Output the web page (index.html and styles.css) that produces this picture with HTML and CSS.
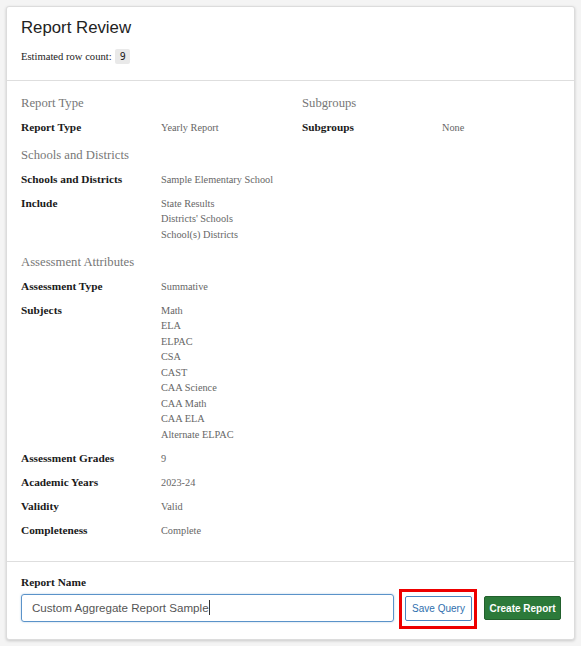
FILE: index.html
```html
<!DOCTYPE html>
<html>
<head>
<meta charset="utf-8">
<link rel="stylesheet" href="styles.css">
</head>
<body>
<div class="card">
  <div class="card-header">
    <h1 class="title">Report Review</h1>
    <div class="rowcount">Estimated row count: <span class="badge">9</span></div>
  </div>
  <div class="card-body">
    <div class="col">
      <div class="section">Report Type</div>
      <div class="row"><div class="label">Report Type</div><div class="value">Yearly Report</div></div>
      <div class="section spaced">Schools and Districts</div>
      <div class="row"><div class="label">Schools and Districts</div><div class="value">Sample Elementary School</div></div>
      <div class="row"><div class="label">Include</div><div class="value">State Results<br>Districts' Schools<br>School(s) Districts</div></div>
      <div class="section spaced">Assessment Attributes</div>
      <div class="row"><div class="label">Assessment Type</div><div class="value">Summative</div></div>
      <div class="row"><div class="label">Subjects</div><div class="value">Math<br>ELA<br>ELPAC<br>CSA<br>CAST<br>CAA Science<br>CAA Math<br>CAA ELA<br>Alternate ELPAC</div></div>
      <div class="row"><div class="label">Assessment Grades</div><div class="value">9</div></div>
      <div class="row"><div class="label">Academic Years</div><div class="value">2023-24</div></div>
      <div class="row"><div class="label">Validity</div><div class="value">Valid</div></div>
      <div class="row"><div class="label">Completeness</div><div class="value">Complete</div></div>
    </div>
    <div class="col">
      <div class="section">Subgroups</div>
      <div class="row"><div class="label">Subgroups</div><div class="value">None</div></div>
    </div>
  </div>
  <div class="card-footer">
    <div class="name-label">Report Name</div>
    <div class="actions">
      <div class="input">Custom Aggregate Report Sample<span class="caret"></span></div>
      <div class="highlight-wrap">
        <button class="btn btn-outline">Save Query</button>
        <div class="highlight"></div>
      </div>
      <button class="btn btn-green">Create Report</button>
    </div>
  </div>
</div>
</body>
</html>
```

FILE: styles.css
```css
* { box-sizing: border-box; }
html, body { margin: 0; padding: 0; }
body {
  background: #f4f4f4;
  padding: 6px;
  font-family: "Liberation Serif", "Times New Roman", serif;
  font-size: 10.5px;
  color: #222;
}
.card {
  background: #fff;
  border: 1px solid #dcdcdc;
  border-radius: 3px;
  box-shadow: 0 1px 3px rgba(0,0,0,0.18);
  width: 569px;
  height: 634px;
}
.card-header {
  padding: 10px 14px 15px;
  border-bottom: 1px solid #dedede;
}
.title {
  margin: 0;
  font-family: "Liberation Sans", Arial, sans-serif;
  font-weight: normal;
  font-size: 16.8px;
  line-height: 22px;
  color: #222;
}
.rowcount {
  margin-top: 10px;
  line-height: 15.5px;
  font-size: 10.6px;
}
.badge {
  display: inline-block;
  background: #e9e9e9;
  border-radius: 2px;
  font-family: "DejaVu Sans Mono", monospace;
  font-size: 10px;
  line-height: 15px;
  width: 15px;
  text-align: center;
  margin-left: 1px;
}
.card-body {
  display: grid;
  grid-template-columns: 281px 1fr;
  padding: 15px 14px 14px;
  border-bottom: 1px solid #dedede;
}
.section {
  font-size: 12.7px;
  line-height: 15.5px;
  color: #777;
  padding-bottom: 8.5px;
}
.section.spaced { margin-top: 4px; }
.row {
  display: flex;
  line-height: 15.5px;
  padding-bottom: 8.5px;
}
.label {
  width: 140px;
  flex: none;
  font-weight: bold;
  font-size: 11.3px;
  color: #1a1a1a;
}
.value { color: #666; font-size: 10.3px; }
.card-footer {
  padding: 13px 13px 0 14px;
}
.name-label {
  font-weight: bold;
  font-size: 11.3px;
  line-height: 15.5px;
  color: #1a1a1a;
}
.actions {
  display: flex;
  align-items: center;
  margin-top: 4px;
  gap: 11px;
}
.input {
  width: 373px;
  height: 28px;
  border: 1px solid #5b93c9;
  border-radius: 3px;
  box-shadow: 0 0 2px rgba(91,147,201,0.5);
  font-family: "Liberation Sans", Arial, sans-serif;
  font-size: 11.6px;
  color: #555;
  line-height: 26px;
  padding-left: 10px;
}
.caret {
  display: inline-block;
  width: 1px;
  height: 15px;
  background: #333;
  vertical-align: -3px;
}
.highlight-wrap { position: relative; display: flex; }
.highlight {
  position: absolute;
  left: -6px; right: -5px; top: -7px; bottom: -8px;
  border: 3px solid #ee0000;
}
.btn {
  font-family: "Liberation Sans", Arial, sans-serif;
  font-size: 10px;
  height: 25px;
  border-radius: 2px;
  padding: 0;
  white-space: nowrap;
  cursor: pointer;
}
.btn-outline {
  background: #fff;
  border: 1px solid #4a86c0;
  color: #2f6fae;
  width: 67px;
}
.btn-green {
  background: #2c7a3a;
  border: 1px solid #22602d;
  color: #fff;
  font-weight: bold;
  width: 77px;
  margin-left: 1px;
  height: 24px;
}
```
